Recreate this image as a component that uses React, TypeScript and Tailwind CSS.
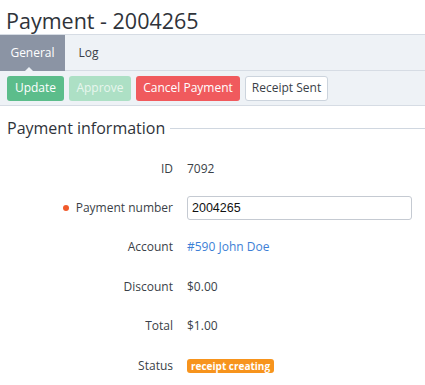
import React from "react";

const font = { fontFamily: "'Open Sans', 'Liberation Sans', sans-serif" };

function Row({ label, required, children }: { label: string; required?: boolean; children: React.ReactNode }) {
  return (
    <div className="flex items-center h-[39.4px]">
      <div className="w-[173px] flex justify-end items-center gap-[7px] text-[12px] text-[#3a3f48]">
        {required && <span className="w-[6px] h-[6px] rounded-full bg-[#f15a2b]" />}
        <span>{label}</span>
      </div>
      <div className="flex-1 pl-[14px] pr-[13px] flex items-center text-[12px] text-[#3a3f48]">{children}</div>
    </div>
  );
}

export default function App() {
  return (
    <div className="w-[425px] h-[385px] bg-white overflow-hidden" style={font}>
      {/* Title */}
      <div className="h-[34px] pl-[6px] pt-[7px] text-[21.5px] leading-[27px] text-[#2f333a]">Payment - 2004265</div>

      {/* Tabs + toolbar */}
      <div className="bg-[#eef2f6] border-t border-b border-[#d6dce4]">
        <div className="flex h-[36px] border-b border-[#d6dce4]">
          <div className="relative w-[65px] h-[36px] bg-[#8b94a4] text-white text-[12px] flex items-center justify-center">
            General
            <span className="absolute left-[24px] bottom-[-1px] w-0 h-0 border-l-[5px] border-r-[5px] border-b-[5px] border-l-transparent border-r-transparent border-b-[#eef2f6]" />
          </div>
          <div className="w-[47px] text-[12px] text-[#3a3f48] flex items-center justify-center">Log</div>
        </div>
        <div className="flex items-center gap-[5px] h-[34px] pl-[7px]">
          <button className="h-[25px] w-[57px] rounded-[3px] bg-[#5cbd8b] text-white text-[12px]">Update</button>
          <button className="h-[25px] w-[62px] rounded-[3px] bg-[#ade0c5] text-[#e8f6ee] text-[12px]">Approve</button>
          <button className="h-[25px] w-[104px] rounded-[3px] bg-[#f05a5d] text-white text-[12px]">Cancel Payment</button>
          <button className="h-[25px] w-[83px] rounded-[3px] bg-white border border-[#ccd4dd] text-[#3a3f48] text-[12px]">Receipt Sent</button>
        </div>
      </div>

      {/* Section */}
      <div className="pt-[10px]">
        <div className="flex items-center h-[24px] pl-[7px]">
          <span className="text-[16px] text-[#2f333a] pr-[5px]">Payment information</span>
          <div className="flex-1 h-px bg-[#d0d7e0]" />
        </div>
        <div className="mt-[9px]">
          <Row label="ID">7092</Row>
          <Row label="Payment number" required>
            <input
              readOnly
              value="2004265"
              className="w-full h-[24px] border border-[#c5cad2] rounded-[3px] px-[4px] text-[12.5px] text-[#111] outline-none"
              style={{ fontFamily: "'Liberation Sans', Arial, sans-serif" }}
            />
          </Row>
          <Row label="Account">
            <span className="text-[#3d7fd6]">#590 John Doe</span>
          </Row>
          <Row label="Discount">$0.00</Row>
          <Row label="Total">$1.00</Row>
          <Row label="Status">
            <span className="h-[14px] px-[4px] rounded-[3px] bg-[#f7941d] text-white text-[10px] font-bold leading-[14px]">
              receipt creating
            </span>
          </Row>
        </div>
      </div>
    </div>
  );
}
